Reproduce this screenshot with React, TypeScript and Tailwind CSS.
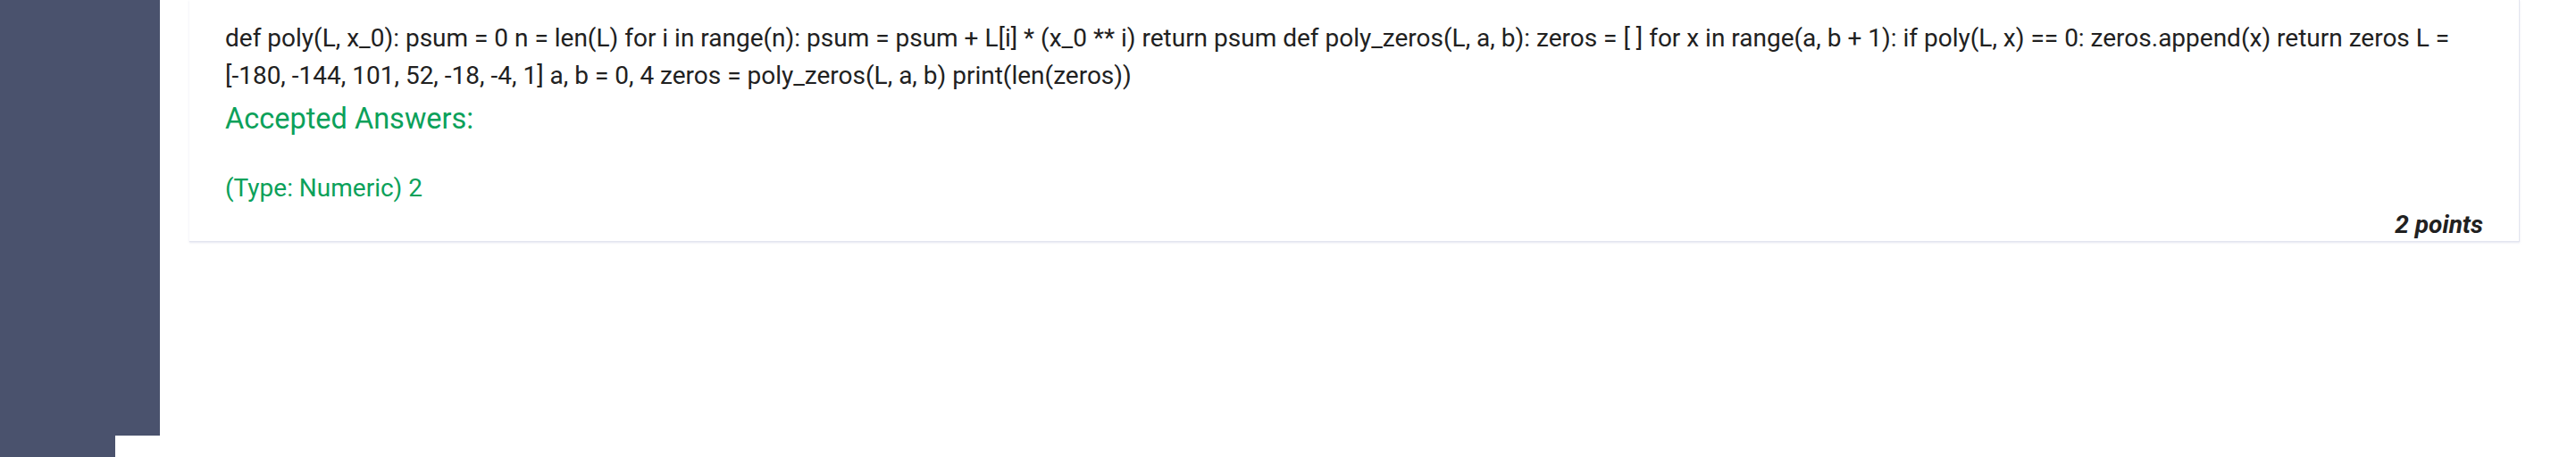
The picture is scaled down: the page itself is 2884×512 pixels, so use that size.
import React from 'react';

const code =
    'def poly(L, x_0): psum = 0 n = len(L) for i in range(n): psum = psum + L[i] * (x_0 ** i) return psum def poly_zeros(L, a, b): zeros = [ ] for x in range(a, b + 1): if poly(L, x) == 0: zeros.append(x) return zeros L = [-180, -144, 101, 52, -18, -4, 1] a, b = 0, 4 zeros = poly_zeros(L, a, b) print(len(zeros))';

const App: React.FC = () => {
    return (
        <div className="flex h-[512px] w-[2884px] bg-white font-['Roboto','Liberation_Sans',sans-serif] text-[#212121]">
            {/* sidebar */}
            <div className="flex flex-col">
                <div className="w-[179px] h-[488px] bg-[#4a526d]" />
                <div className="w-[129px] flex-1 bg-[#4a526d]" />
            </div>

            <div className="pl-[33px]">
                <div className="w-[2609px] bg-white border-r border-b border-[#e3e5ef] shadow-[0_1px_2px_rgba(200,204,225,0.5)] px-[40px] pt-[22px] pb-[2px]">
                    <p className="text-[28px] leading-[42px]">{code}</p>

                    <div className="mt-[6px] text-[32.5px] leading-[42px] text-[#0ba15a]">Accepted Answers:</div>

                    <div className="mt-[36px] text-[28px] leading-[42px] text-[#0ba15a]">(Type: Numeric) 2</div>

                    <div className="mt-[4px] text-right text-[28px] leading-[32px] font-bold italic">2 points</div>
                </div>
            </div>
        </div>
    );
};

export default App;
